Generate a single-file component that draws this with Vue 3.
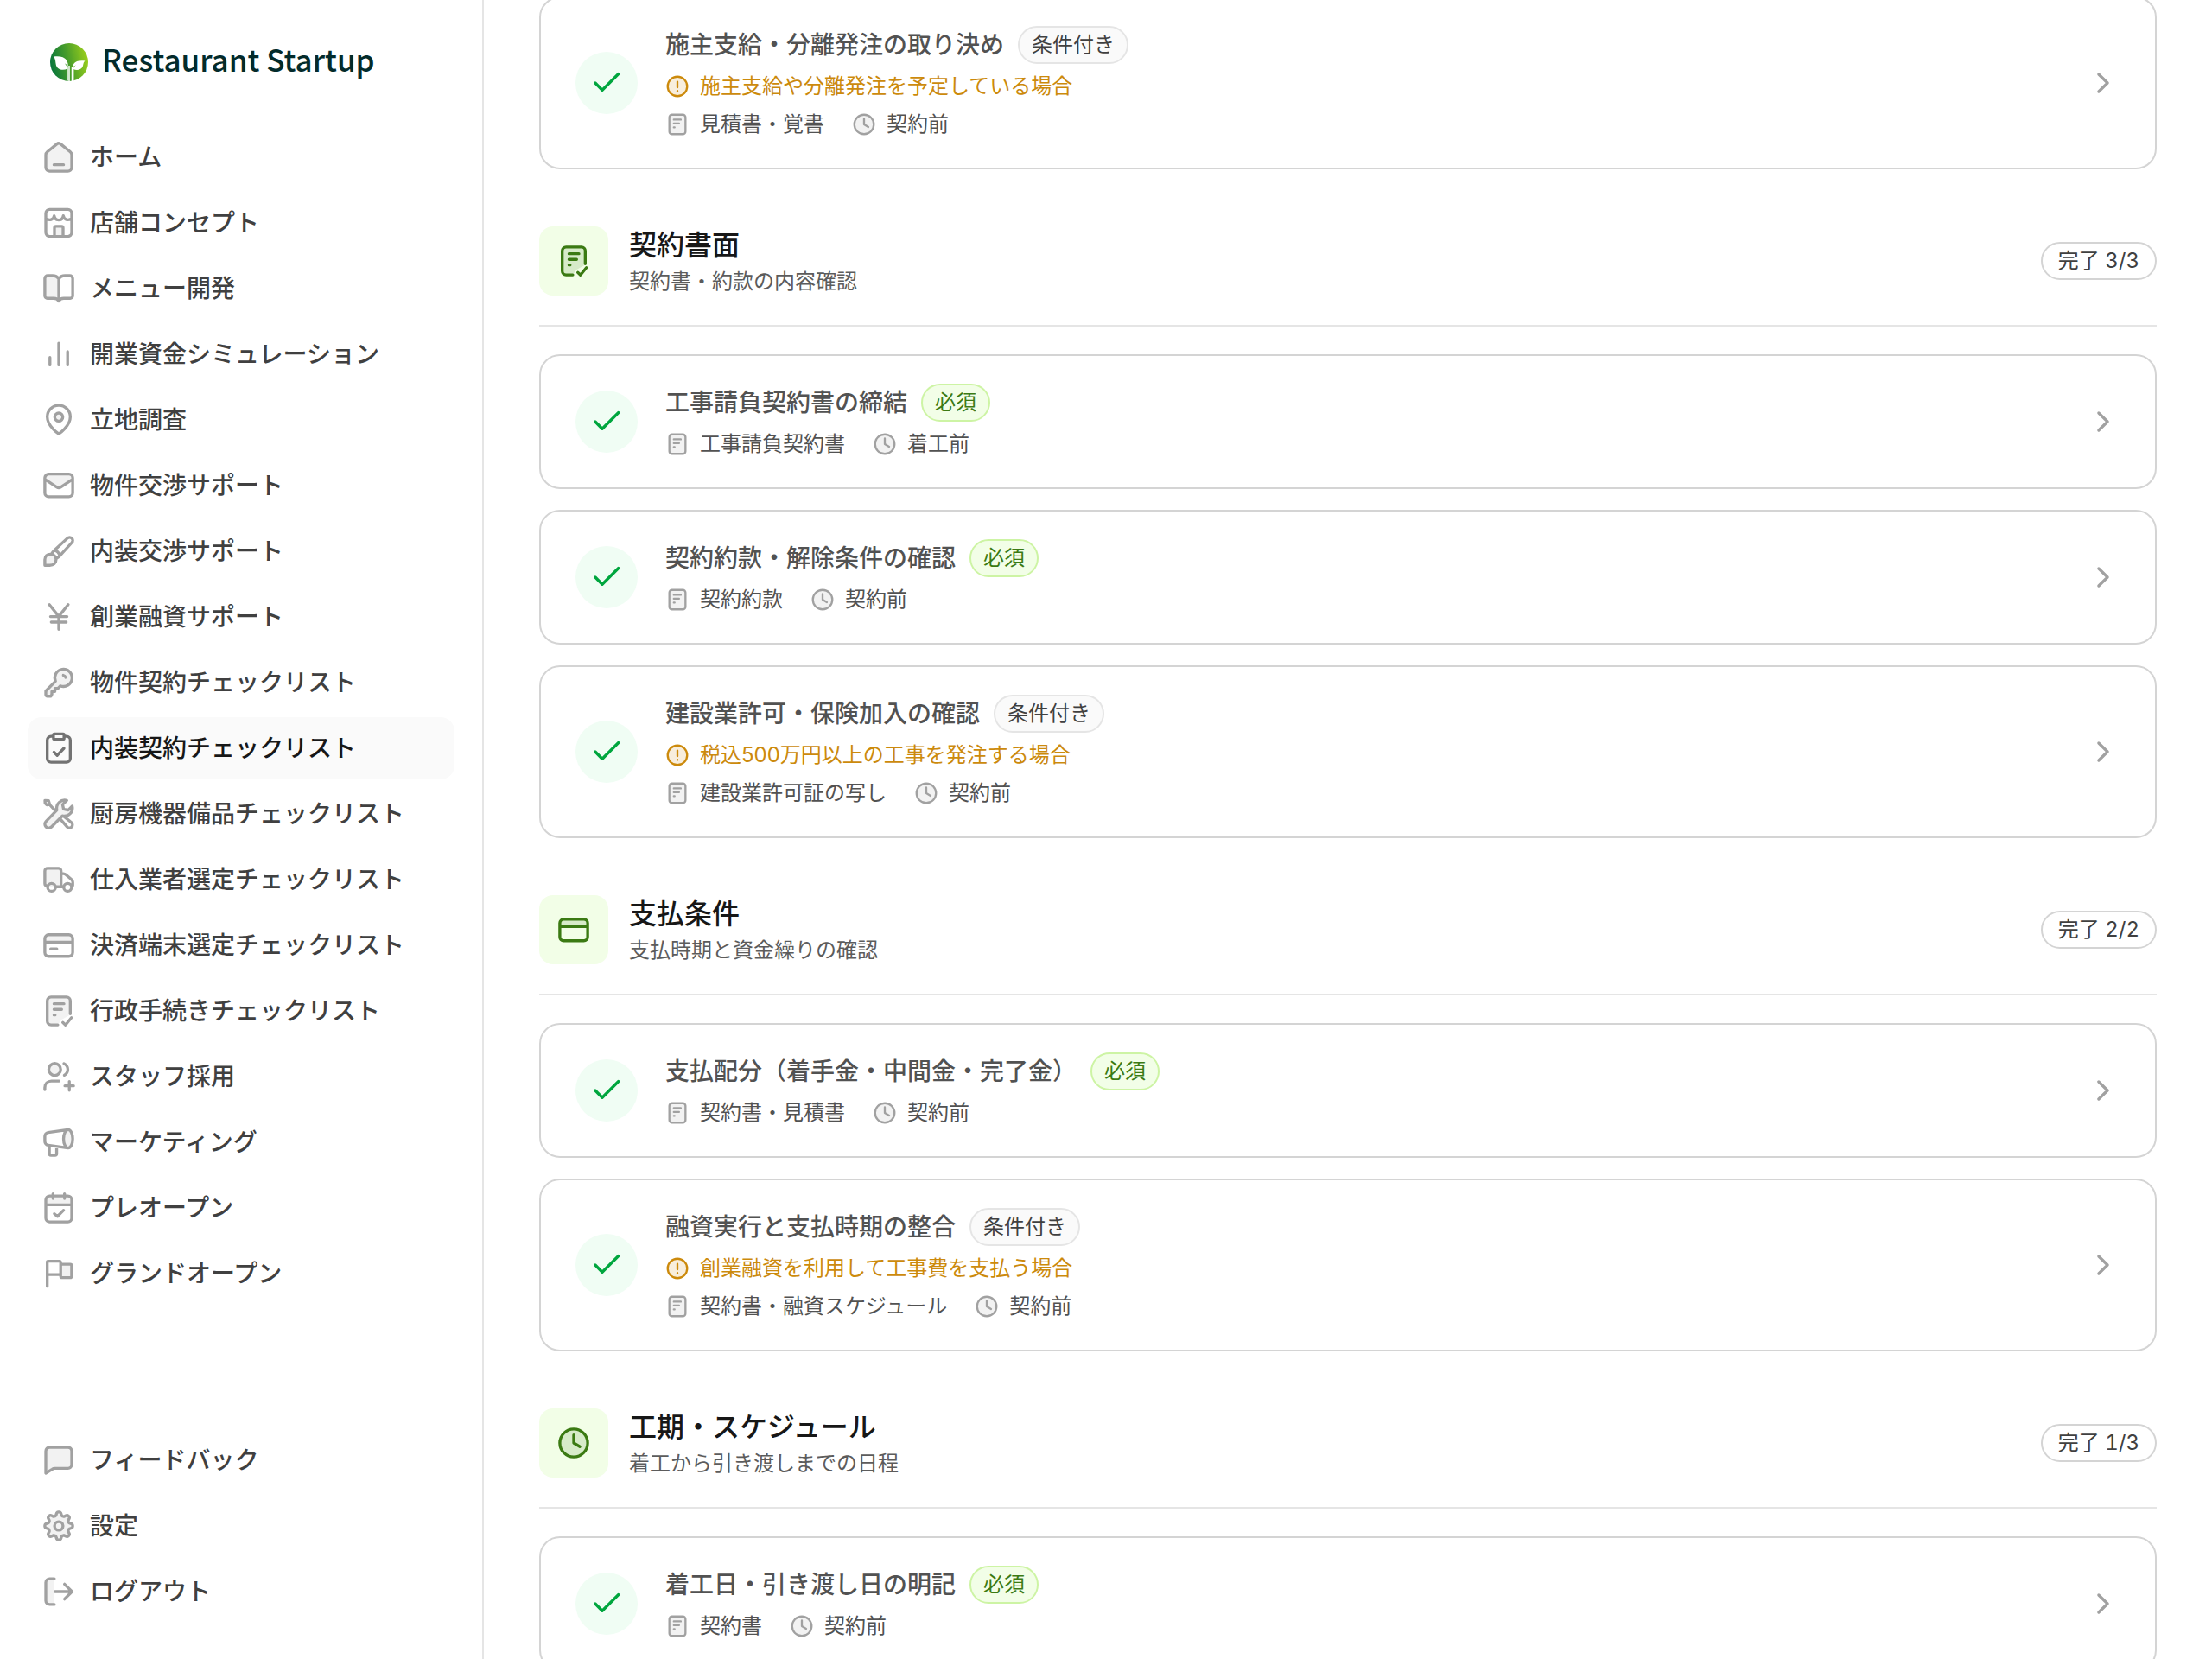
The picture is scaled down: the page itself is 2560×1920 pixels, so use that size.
<template>
  <div class="layout">
    <aside class="sidebar">
      <a href="#" class="brand">
        <svg class="brand-mark" viewBox="0 0 44 44" aria-hidden="true">
          <defs>
            <linearGradient id="leaf" x1="0" y1="0.6" x2="1" y2="0.4">
              <stop offset="0" stop-color="#06743c" />
              <stop offset="0.5" stop-color="#4b9f2a" />
              <stop offset="1" stop-color="#9bcf1c" />
            </linearGradient>
          </defs>
          <circle cx="22" cy="22" r="22" fill="url(#leaf)" />
          <path
            fill="#fff"
            d="M4 15.500C11 14.500 16.500 16 19 19.500C20.500 22 21 25 20.500 27.500C20 25.500 18.500 24 17 23.500C18.700 25.500 19.700 27.500 20.200 29.500C14 32.500 8 30 6.800 25C6 21.500 6.500 18.500 4 15.500ZM40.500 20.500C38 22 38.800 25 37.500 27.500C35.500 31 30.500 32 26.600 29.800C27.200 28 28.500 26.500 30 25.500C28 26 26.800 27 26 28.300C26 22.500 31 19 40.500 20.500Z"
          />
          <path d="M22 26V44M25.500 28V44" stroke="#fff" stroke-width="1.500" />
          <path d="M20.600 27V43.500M27 30V43" stroke="#fff" stroke-width="0.800" />
        </svg>
        <span class="brand-name">Restaurant Startup</span>
      </a>

      <nav class="nav">
        <a
          v-for="item in mainNav"
          :key="item.label"
          href="#"
          class="nav-item"
          :class="{ active: item.label === current }"
          @click.prevent="current = item.label"
        >
          <Icon :name="item.icon" class="nav-icon" />
          <span>{{ item.label }}</span>
        </a>
      </nav>

      <nav class="nav nav-bottom">
        <a v-for="item in bottomNav" :key="item.label" href="#" class="nav-item">
          <Icon :name="item.icon" class="nav-icon" />
          <span>{{ item.label }}</span>
        </a>
      </nav>
    </aside>

    <main class="content">
      <section v-for="(section, i) in sections" :key="i" class="section">
        <header v-if="section.title" class="section-header">
          <div class="section-icon">
            <Icon :name="section.icon" class="icon-lg" />
          </div>
          <div class="section-text">
            <h2>{{ section.title }}</h2>
            <p>{{ section.description }}</p>
          </div>
          <span class="progress">完了 {{ section.progress }}</span>
        </header>

        <ul class="cards">
          <li v-for="task in section.tasks" :key="task.title" class="card">
            <button
              type="button"
              class="check"
              :aria-label="task.title + ' 完了'"
              :aria-pressed="task.done"
              @click="task.done = !task.done"
            >
              <Icon v-if="task.done" name="check" class="icon-lg" />
            </button>
            <a href="#" class="card-link">
              <div class="card-body">
                <div class="card-title">
                  <h3>{{ task.title }}</h3>
                  <span class="badge" :class="{ required: task.required }">
                    {{ task.required ? '必須' : '条件付き' }}
                  </span>
                </div>
                <div v-if="task.condition" class="row condition">
                  <Icon name="alert" class="icon-sm" />
                  <span>{{ task.condition }}</span>
                </div>
                <div class="meta">
                  <div class="row">
                    <Icon name="doc" class="icon-sm" />
                    <span>{{ task.document }}</span>
                  </div>
                  <div class="row">
                    <Icon name="clock" class="icon-sm" />
                    <span>{{ task.timing }}</span>
                  </div>
                </div>
              </div>
              <Icon name="chevron" class="icon-lg chevron" />
            </a>
          </li>
        </ul>
      </section>
    </main>
  </div>
</template>

<script setup>
import { h, ref } from 'vue';

// eight rounded teeth around the centre of the 18x18 grid
const gearPath = () => {
  const points = [];
  for (let i = 0; i < 160; i++) {
    const a = (i / 160) * Math.PI * 2;
    const wave = Math.tanh(1.6 * Math.cos(a * 8)) / Math.tanh(1.6);
    const r = 6.35 + 0.9 * wave;
    points.push(`${(9 + r * Math.cos(a)).toFixed(2)} ${(9 + r * Math.sin(a)).toFixed(2)}`);
  }
  return `M${points.join('L')}Z`;
};
const gear = gearPath();

const circle = 'M16.250 9a7.250 7.250 0 1 1-14.500 0a7.250 7.250 0 1 1 14.500 0Z';
const house = 'M3 6.200L7.900 2.200a1.700 1.700 0 0 1 2.200 0L15 6.200c.5.400.75.95.75 1.560v6.490a2 2 0 0 1-2 2H4.250a2 2 0 0 1-2-2V7.760c0-.61.250-1.160.75-1.560Z';
const docCheck = 'M15 10.500V3.750a2 2 0 0 0-2-2H5a2 2 0 0 0-2 2v10.500a2 2 0 0 0 2 2h3.500';
const clipboard = 'M5.750 2.750H5a2 2 0 0 0-2 2v9.500a2 2 0 0 0 2 2h8a2 2 0 0 0 2-2v-9.500a2 2 0 0 0-2-2h-.75';
const wrench = 'M16 4.900L13.900 7L11.500 6.500L11 4.100L13.200 1.950C10.100 1.200 7.300 3.900 8 7L2.350 12.900a2 2 0 0 0 2.850 2.850L10.900 10C14.100 10.600 16.800 8 16 4.900Z';
const chat = 'M2.250 15.750V4.250a2 2 0 0 1 2-2h9.500a2 2 0 0 1 2 2v7a2 2 0 0 1-2 2H6.900c-.5 0-.9.150-1.300.450L2.250 15.750Z';
const cardFrame = 'M3.750 3.500h10.500a2 2 0 0 1 2 2v7.250a2 2 0 0 1-2 2H3.750a2 2 0 0 1-2-2V5.500a2 2 0 0 1 2-2Z';
const cardTop = 'M1.750 7.250V5.500a2 2 0 0 1 2-2h10.500a2 2 0 0 1 2 2v1.750Z';
const key = 'M7.300 8.300A4.500 4.500 0 1 1 9.800 10.700L8.600 12H7v1.600H5.400v1.500L4.900 16.100H3.100a.85.85 0 0 1-.85-.85V13.400Z';

const icons = {
  home: { fill: house, line: house + 'M6.500 12.900h5' },
  store: {
    fill: 'M6.750 15.750v-4.200a.8.800 0 0 1 .8-.8h2.900a.8.800 0 0 1 .8.800v4.200Z',
    line: 'M4.250 2h9.500a2 2 0 0 1 2 2v10a2 2 0 0 1-2 2H4.250a2 2 0 0 1-2-2V4a2 2 0 0 1 2-2ZM2.250 6.700C4 8 6.400 7.300 6.600 5.200C6.800 6.700 7.700 7.500 9 7.500S11.200 6.700 11.400 5.200C11.600 7.300 14 8 15.750 6.700M6.750 15.750v-4.200a.8.800 0 0 1 .8-.8h2.900a.8.800 0 0 1 .8.800v4.200'
  },
  book: {
    fill: 'M9 3.900C8.300 2.800 7.200 2.250 5.750 2.250H3.250a1.500 1.500 0 0 0-1.500 1.500v9.500a1.300 1.300 0 0 0 1.300 1.300H6.400c1.200 0 2.100.2 2.600 1.200Z',
    line: 'M9 3.900C8.300 2.800 7.200 2.250 5.750 2.250H3.250a1.500 1.500 0 0 0-1.500 1.500v9a1.300 1.300 0 0 0 1.300 1.300H6.400c1.200 0 2.100.5 2.600 1.500c.5-1 1.400-1.500 2.600-1.500h3.350a1.300 1.300 0 0 0 1.300-1.300v-9a1.500 1.500 0 0 0-1.500-1.500h-2.500C10.800 2.250 9.700 2.800 9 3.900ZM9 3.900V15.500'
  },
  bars: { line: 'M4.400 10.700v3.900M9 3.200v11.400M13.600 7.600v7' },
  pin: {
    fill: 'M11.100 7.500a2.100 2.100 0 1 1-4.200 0a2.100 2.100 0 1 1 4.200 0Z',
    line: 'M9 16.300C9 16.300 3 12.200 3 7.400a6 6 0 0 1 12 0C15 12.200 9 16.300 9 16.300ZM11.100 7.500a2.100 2.100 0 1 1-4.200 0a2.100 2.100 0 1 1 4.200 0Z'
  },
  mail: {
    fill: 'M1.750 5.700V5a2 2 0 0 1 2-2h10.500a2 2 0 0 1 2 2v.7L10 9.700a2 2 0 0 1-2 0Z',
    line: 'M3.750 3h10.500a2 2 0 0 1 2 2v7.800a2 2 0 0 1-2 2H3.750a2 2 0 0 1-2-2V5a2 2 0 0 1 2-2ZM1.750 5.700L8 9.800a1.800 1.800 0 0 0 2 0L16.250 5.700'
  },
  brush: {
    fill: 'M1.750 16.300V13.400C1.750 11.600 3 10.500 4.700 10.500S7.600 11.700 7.600 13.300C7.600 15.300 6.200 16.300 4.300 16.300Z',
    line: 'M1.750 16.300V13.400C1.750 11.600 3 10.500 4.700 10.500S7.600 11.700 7.600 13.300C7.600 15.300 6.200 16.300 4.300 16.300ZM5.300 10.400C5.700 9.500 6.200 8.900 6.900 8.300L13.500 2.200A1.600 1.600 0 0 1 15.800 4.500L9.700 11.200C9.100 11.900 8.500 12.400 7.600 12.800M6.900 8.500C8.200 8.900 9.100 9.900 9.500 11.200'
  },
  yen: { line: 'M4.100 2.600L9 8.700L13.900 2.600M9 8.700V15.400M4.700 8.800h8.600M5.100 11.700h7.800' },
  key: { fill: key, line: key + 'M11.400 5.200c.6.100 1 .5 1.200 1.100' },
  clipboard: {
    line: clipboard + 'M6.750 1.500h4.500a.5.500 0 0 1 .5.500v1.800a.5.500 0 0 1-.5.500h-4.500a.5.500 0 0 1-.5-.5V2a.5.500 0 0 1 .5-.5ZM6.500 11L8.200 12.700L11.700 9'
  },
  tools: {
    fill: wrench,
    line: wrench + 'M1.800 2L3.700 2.100L4.300 4L2.800 4.300L1.900 3.400ZM4 3.900L7 7.100M11.700 10.300L15.650 13.500A1.600 1.600 0 0 1 13.400 15.800L9.700 11.500'
  },
  truck: {
    fill: 'M1.750 12.750V4.500a1.400 1.400 0 0 1 1.400-1.400H8.800a1.400 1.400 0 0 1 1.400 1.400v8.250Z',
    line: 'M3.200 12.400C2.300 12.300 1.750 11.800 1.750 11V4.500a1.400 1.400 0 0 1 1.400-1.400H8.800a1.400 1.400 0 0 1 1.400 1.400v8.200H7.300M10.200 5.900H11.400c.5 0 .9.150 1.300.5L15.700 9c.4.400.6.800.6 1.300V12c0 .3-.2.500-.6.600M10.200 12.700h1.300M7.300 13a2.050 2.050 0 1 1-4.100 0a2.050 2.050 0 1 1 4.100 0ZM15.700 13a2.050 2.050 0 1 1-4.100 0a2.050 2.050 0 1 1 4.100 0Z'
  },
  terminal: { fill: cardTop, line: cardFrame + 'M1.750 7.400h14.500M4.800 10.900h3.200' },
  payment: { fill: cardTop, line: cardFrame + 'M1.750 7.400h14.500' },
  docCheck: {
    fill: docCheck + 'L10.500 13.500L15 11Z',
    line: docCheck + 'M6.500 5.250h5.200M6.500 8.200h4M6.500 11.100h.6M11.100 15L12.500 16.300L15.600 12.500'
  },
  users: {
    fill: 'M10 5.250a3.100 3.100 0 1 1-6.200 0a3.100 3.100 0 1 1 6.200 0Z',
    line: 'M10 5.250a3.100 3.100 0 1 1-6.200 0a3.100 3.100 0 1 1 6.200 0ZM11.700 2.200C13 2.900 13.700 4 13.700 5.250S13 7.600 11.900 8.300M1.750 15.800V14.700C1.750 12.700 3.200 11.300 5.200 11.300H9.200M14.500 11.500v4.600M12.200 13.800h4.500'
  },
  megaphone: {
    fill: 'M16.250 7.200C16.250 9.900 15.200 12 13.900 12S11.500 9.900 11.500 7.200S12.600 2.400 13.900 2.400S16.250 4.500 16.250 7.200Z',
    line: 'M16.250 7.200C16.250 9.900 15.200 12 13.900 12S11.500 9.900 11.500 7.200S12.600 2.400 13.900 2.400S16.250 4.500 16.250 7.200ZM13.900 2.400L3.500 3.900A2 2 0 0 0 1.750 5.900V8.500A2 2 0 0 0 3.500 10.500L13.900 12M4.100 10.700V15a.8.800 0 0 0 .8.800H7.100a.8.800 0 0 0 .8-.8V11.200'
  },
  calendar: {
    fill: 'M2.250 7.400V4.750a2 2 0 0 1 2-2h9.500a2 2 0 0 1 2 2V7.400Z',
    line: 'M4.250 2.750h9.500a2 2 0 0 1 2 2v9.500a2 2 0 0 1-2 2H4.250a2 2 0 0 1-2-2V4.750a2 2 0 0 1 2-2ZM2.250 7.400h13.500M6 1.600v2.500M12 1.600v2.500M6.700 12L8.300 13.400L11.500 10.200'
  },
  flag: {
    fill: 'M10 4.100h4.900a.8.800 0 0 1 .8.800v5.400a.8.800 0 0 1-.8.800H10.700a.7.700 0 0 1-.7-.7Z',
    line: 'M3 15.600V2.900a.4.400 0 0 1 .4-.4H9.200a.8.800 0 0 1 .8.800V10.300a.8.800 0 0 0 .8.800H14.900a.8.800 0 0 0 .8-.8V4.900a.8.800 0 0 0-.8-.8H10M3 9.500h7'
  },
  chat: { fill: chat, line: chat },
  gear: { fill: gear, line: gear + 'M11.200 9a2.200 2.200 0 1 1-4.400 0a2.200 2.200 0 1 1 4.400 0Z' },
  logout: {
    fill: 'M6.500 2.300H4.250a2 2 0 0 0-2 2v9.400a2 2 0 0 0 2 2H6.500Z',
    line: 'M6.700 2.300H4.250a2 2 0 0 0-2 2v9.400a2 2 0 0 0 2 2H6.700M7 9h8.800M12 5.100L15.900 9L12 12.900'
  },
  doc: {
    fill: 'M5 1.750h8a2 2 0 0 1 2 2v10.500a2 2 0 0 1-2 2H5a2 2 0 0 1-2-2V3.750a2 2 0 0 1 2-2Z',
    line: 'M5 1.750h8a2 2 0 0 1 2 2v10.500a2 2 0 0 1-2 2H5a2 2 0 0 1-2-2V3.750a2 2 0 0 1 2-2ZM6.300 5.400h5.200M6.300 8.300h3.900M6.300 11.200h.6'
  },
  clock: { fill: circle, line: circle + 'M9 4.800V9l3.200 1.900' },
  alert: { fill: circle, line: circle + 'M9 5.500v4.200M9 12.300v.2' },
  check: { line: 'M3.100 9L6.750 12.700L15.200 4.300' },
  chevron: { line: 'M6.700 4.500L11.300 9L6.700 13.500' }
};

const Icon = ({ name }) => {
  const icon = icons[name];
  return h('svg', { viewBox: '0 0 18 18', fill: 'none', 'aria-hidden': 'true' }, [
    icon.fill && h('path', { d: icon.fill, fill: 'currentColor', opacity: 0.14 }),
    h('path', {
      d: icon.line,
      stroke: 'currentColor',
      'stroke-width': 1.5,
      'stroke-linecap': 'round',
      'stroke-linejoin': 'round'
    })
  ]);
};
Icon.props = ['name'];

const current = ref('内装契約チェックリスト');

const mainNav = [
  { label: 'ホーム', icon: 'home' },
  { label: '店舗コンセプト', icon: 'store' },
  { label: 'メニュー開発', icon: 'book' },
  { label: '開業資金シミュレーション', icon: 'bars' },
  { label: '立地調査', icon: 'pin' },
  { label: '物件交渉サポート', icon: 'mail' },
  { label: '内装交渉サポート', icon: 'brush' },
  { label: '創業融資サポート', icon: 'yen' },
  { label: '物件契約チェックリスト', icon: 'key' },
  { label: '内装契約チェックリスト', icon: 'clipboard' },
  { label: '厨房機器備品チェックリスト', icon: 'tools' },
  { label: '仕入業者選定チェックリスト', icon: 'truck' },
  { label: '決済端末選定チェックリスト', icon: 'terminal' },
  { label: '行政手続きチェックリスト', icon: 'docCheck' },
  { label: 'スタッフ採用', icon: 'users' },
  { label: 'マーケティング', icon: 'megaphone' },
  { label: 'プレオープン', icon: 'calendar' },
  { label: 'グランドオープン', icon: 'flag' }
];

const bottomNav = [
  { label: 'フィードバック', icon: 'chat' },
  { label: '設定', icon: 'gear' },
  { label: 'ログアウト', icon: 'logout' }
];

const sections = ref([
  {
    tasks: [
      {
        title: '施主支給・分離発注の取り決め',
        condition: '施主支給や分離発注を予定している場合',
        document: '見積書・覚書',
        timing: '契約前',
        done: true
      }
    ]
  },
  {
    title: '契約書面',
    description: '契約書・約款の内容確認',
    icon: 'docCheck',
    progress: '3/3',
    tasks: [
      { title: '工事請負契約書の締結', required: true, document: '工事請負契約書', timing: '着工前', done: true },
      { title: '契約約款・解除条件の確認', required: true, document: '契約約款', timing: '契約前', done: true },
      {
        title: '建設業許可・保険加入の確認',
        condition: '税込500万円以上の工事を発注する場合',
        document: '建設業許可証の写し',
        timing: '契約前',
        done: true
      }
    ]
  },
  {
    title: '支払条件',
    description: '支払時期と資金繰りの確認',
    icon: 'payment',
    progress: '2/2',
    tasks: [
      { title: '支払配分（着手金・中間金・完了金）', required: true, document: '契約書・見積書', timing: '契約前', done: true },
      {
        title: '融資実行と支払時期の整合',
        condition: '創業融資を利用して工事費を支払う場合',
        document: '契約書・融資スケジュール',
        timing: '契約前',
        done: true
      }
    ]
  },
  {
    title: '工期・スケジュール',
    description: '着工から引き渡しまでの日程',
    icon: 'clock',
    progress: '1/3',
    tasks: [
      { title: '着工日・引き渡し日の明記', required: true, document: '契約書', timing: '契約前', done: true }
    ]
  }
]);
</script>

<style>
body {
  background-color: #fff;
}
</style>

<style scoped>
.layout {
  display: flex;
  height: 100vh;
  overflow: hidden;
  background-color: #fff;
  color: #404040;
  font-family: Inter, "Noto Sans CJK JP", sans-serif;
  font-size: 24px;
  line-height: 36px;
}

a {
  color: inherit;
  text-decoration: none;
}

h2,
h3,
p {
  margin: 0;
}

svg {
  display: block;
  flex-shrink: 0;
}

.sidebar {
  display: flex;
  flex-direction: column;
  flex-shrink: 0;
  box-sizing: border-box;
  width: 560px;
  padding: 48px 32px 42px;
  border-right: 2px solid #e5e5e5;
}

.brand {
  display: flex;
  align-items: center;
  gap: 16px;
  height: 48px;
  padding: 0 26px;
  margin-bottom: 50px;
}

.brand-mark {
  width: 44px;
  height: 44px;
}

.brand-name {
  color: #032b2b;
  font-family: "Noto Sans CJK JP", sans-serif;
  font-size: 35px;
  font-weight: 500;
  line-height: 40px;
  padding-bottom: 8px;
  white-space: nowrap;
}

.nav {
  display: flex;
  flex-direction: column;
  gap: 4px;
}

.nav-bottom {
  margin-top: auto;
}

.nav-item {
  display: flex;
  align-items: center;
  gap: 16px;
  height: 72px;
  padding: 0 16px;
  border-radius: 16px;
  font-size: 28px;
  font-weight: 500;
  white-space: nowrap;
}

.nav-item:hover,
.nav-item.active {
  background-color: #fafafa;
}

.nav-item.active {
  color: #171717;
}

.nav-icon {
  width: 40px;
  height: 40px;
  color: #a1a1a1;
}

.active .nav-icon {
  color: #737373;
}

.content {
  flex: 1;
  min-width: 0;
  padding: 0 64px 64px;
  margin-top: -4px;
  overflow-y: auto;
  scrollbar-width: none;
}

.section + .section {
  margin-top: 64px;
}

.section-header {
  display: flex;
  align-items: center;
  gap: 24px;
  padding-bottom: 32px;
  margin-bottom: 32px;
  border-bottom: 2px solid #e5e5e5;
}

.section-icon {
  display: grid;
  place-items: center;
  width: 80px;
  height: 80px;
  border-radius: 16px;
  background-color: #f2fee7;
  color: #3b7a13;
}

.section-text {
  flex: 1;
}

.section-text h2 {
  color: #171717;
  font-size: 32px;
  font-weight: 500;
  line-height: 48px;
}

.section-text p {
  color: #5c5c5c;
}

.progress {
  padding: 2px 18px;
  border: 2px solid #d4d4d4;
  border-radius: 22px;
  font-variant-numeric: tabular-nums;
}

.cards {
  display: flex;
  flex-direction: column;
  gap: 24px;
  margin: 0;
  padding: 0;
  list-style: none;
}

.card {
  display: flex;
  align-items: center;
  gap: 32px;
  padding: 32px 40px;
  border: 2px solid #d4d4d4;
  border-radius: 24px;
  color: #525252;
}

.check {
  display: grid;
  place-items: center;
  width: 72px;
  height: 72px;
  padding: 0;
  border: none;
  border-radius: 50%;
  background-color: #f0fdf4;
  color: #00a63e;
  cursor: pointer;
}

.card-link {
  display: flex;
  align-items: center;
  flex: 1;
}

.card-body {
  display: flex;
  flex-direction: column;
  gap: 8px;
  flex: 1;
}

.card-title {
  display: flex;
  align-items: center;
  gap: 16px;
}

.card-title h3 {
  font-size: 28px;
  font-weight: 500;
  line-height: 44px;
}

.badge {
  padding: 2px 14px;
  border: 2px solid #e5e5e5;
  border-radius: 22px;
  background-color: #fafafa;
  color: #404040;
}

.badge.required {
  border-color: #cdf4a4;
  background-color: #f2fee7;
  color: #3b7a13;
}

.row {
  display: flex;
  align-items: center;
  gap: 12px;
}

.condition {
  color: #cc8a0c;
}

.meta {
  display: flex;
  gap: 32px;
}

.meta svg,
.chevron {
  color: #a1a1a1;
}

.icon-sm {
  width: 28px;
  height: 28px;
}

.icon-lg {
  width: 40px;
  height: 40px;
}
</style>
